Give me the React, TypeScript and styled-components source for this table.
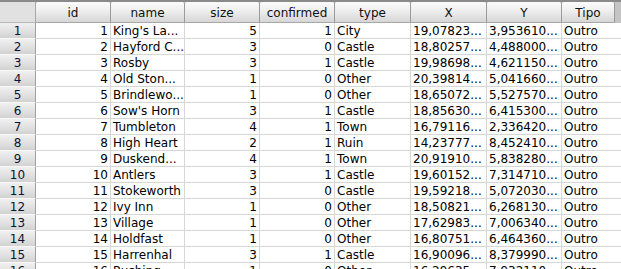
import React from "react";
import styled, { createGlobalStyle } from "styled-components";

const Global = createGlobalStyle`
  html, body { margin: 0; padding: 0; background: #ffffff; }
  body { font-family: "DejaVu Sans", Verdana, sans-serif; font-size: 12px; }
`;

type RowData = [number, string, number, number, string, string, string, string];

const rows: RowData[] = [
  [1, "King's La...", 5, 1, "City", "19,07823...", "3,953610...", "Outro"],
  [2, "Hayford C...", 3, 0, "Castle", "18,80257...", "4,488000...", "Outro"],
  [3, "Rosby", 3, 1, "Castle", "19,98698...", "4,621150...", "Outro"],
  [4, "Old Ston...", 1, 0, "Other", "20,39814...", "5,041660...", "Outro"],
  [5, "Brindlewo...", 1, 0, "Other", "18,65072...", "5,527570...", "Outro"],
  [6, "Sow's Horn", 3, 1, "Castle", "18,85630...", "6,415300...", "Outro"],
  [7, "Tumbleton", 4, 1, "Town", "16,79116...", "2,336420...", "Outro"],
  [8, "High Heart", 2, 1, "Ruin", "14,23777...", "8,452410...", "Outro"],
  [9, "Duskend...", 4, 1, "Town", "20,91910...", "5,838280...", "Outro"],
  [10, "Antlers", 3, 1, "Castle", "19,60152...", "7,314710...", "Outro"],
  [11, "Stokeworth", 3, 0, "Castle", "19,59218...", "5,072030...", "Outro"],
  [12, "Ivy Inn", 1, 0, "Other", "18,50821...", "6,268130...", "Outro"],
  [13, "Village", 1, 0, "Other", "17,62983...", "7,006340...", "Outro"],
  [14, "Holdfast", 1, 0, "Other", "16,80751...", "6,464360...", "Outro"],
  [15, "Harrenhal", 3, 1, "Castle", "16,90096...", "8,379990...", "Outro"],
  [16, "Rushing ...", 1, 0, "Other", "16,29635...", "7,932110...", "Outro"],
];

const headers = ["id", "name", "size", "confirmed", "type", "X", "Y", "Tipo"];

const Frame = styled.div`
  width: 621px;
  height: 269px;
  overflow: hidden;
  display: flex;
  flex-direction: column;
  background: #ffffff;
`;

const TopStrip = styled.div`
  height: 2px;
  flex: none;
  background: #8a8a8a;
`;

const HeaderRow = styled.div`
  display: flex;
  height: 21px;
  flex: none;
  background: #c4c4c4;
`;

const Corner = styled.div`
  width: 36px;
  flex: none;
  background: #e1e1e1;
  border-right: 1px solid #a8a8a8;
  border-bottom: 1px solid #b8b8b8;
  box-sizing: border-box;
`;

const HeaderCell = styled.div<{ $w: number }>`
  width: ${(p) => p.$w}px;
  flex: none;
  box-sizing: border-box;
  display: flex;
  align-items: center;
  justify-content: center;
  background: linear-gradient(#fbfbfb, #f0f0f0 40%, #d6d6d6);
  border-right: 1px solid #9a9a9a;
  border-bottom: 1px solid #a8a8a8;
  border-radius: 2px 2px 0 0;
  color: #101010;
  padding-top: 1px;
`;

const HeaderFiller = styled.div`
  flex: 1;
  background: #c4c4c4;
`;

const Body = styled.div`
  display: flex;
  flex-direction: column;
`;

const Row = styled.div`
  display: flex;
  height: 16px;
  flex: none;
`;

const RowHeader = styled.div`
  width: 36px;
  flex: none;
  box-sizing: border-box;
  display: flex;
  align-items: center;
  justify-content: center;
  background: linear-gradient(#f0f0f0, #e2e2e2 50%, #d2d2d2);
  border-right: 1px solid #a0a0a0;
  border-bottom: 1px solid #f8f8f8;
  color: #101030;
`;

const Cell = styled.div<{ $w: number; $right?: boolean }>`
  width: ${(p) => p.$w}px;
  flex: none;
  box-sizing: border-box;
  display: flex;
  align-items: center;
  justify-content: ${(p) => (p.$right ? "flex-end" : "flex-start")};
  padding: 0 2px 0 2px;
  border-right: 1px solid #d6d6d6;
  border-bottom: 1px solid #d6d6d6;
  color: #000000;
  white-space: nowrap;
  overflow: hidden;
`;

const widths = [75, 74, 75, 75, 76, 76, 75, 53];
const rightAligned = [true, false, true, true, false, false, false, false];

export default function App() {
  return (
    <>
      <Global />
      <Frame>
        <TopStrip />
        <HeaderRow>
          <Corner />
          {headers.map((h, i) => (
            <HeaderCell key={h} $w={widths[i]}>
              {h}
            </HeaderCell>
          ))}
          <HeaderFiller />
        </HeaderRow>
        <Body>
          {rows.map((r, ri) => (
            <Row key={ri}>
              <RowHeader>{ri + 1}</RowHeader>
              {r.map((v, ci) => (
                <Cell
                  key={ci}
                  $w={ci === 7 ? 80 : widths[ci]}
                  $right={rightAligned[ci]}
                >
                  {v}
                </Cell>
              ))}
            </Row>
          ))}
        </Body>
      </Frame>
    </>
  );
}
